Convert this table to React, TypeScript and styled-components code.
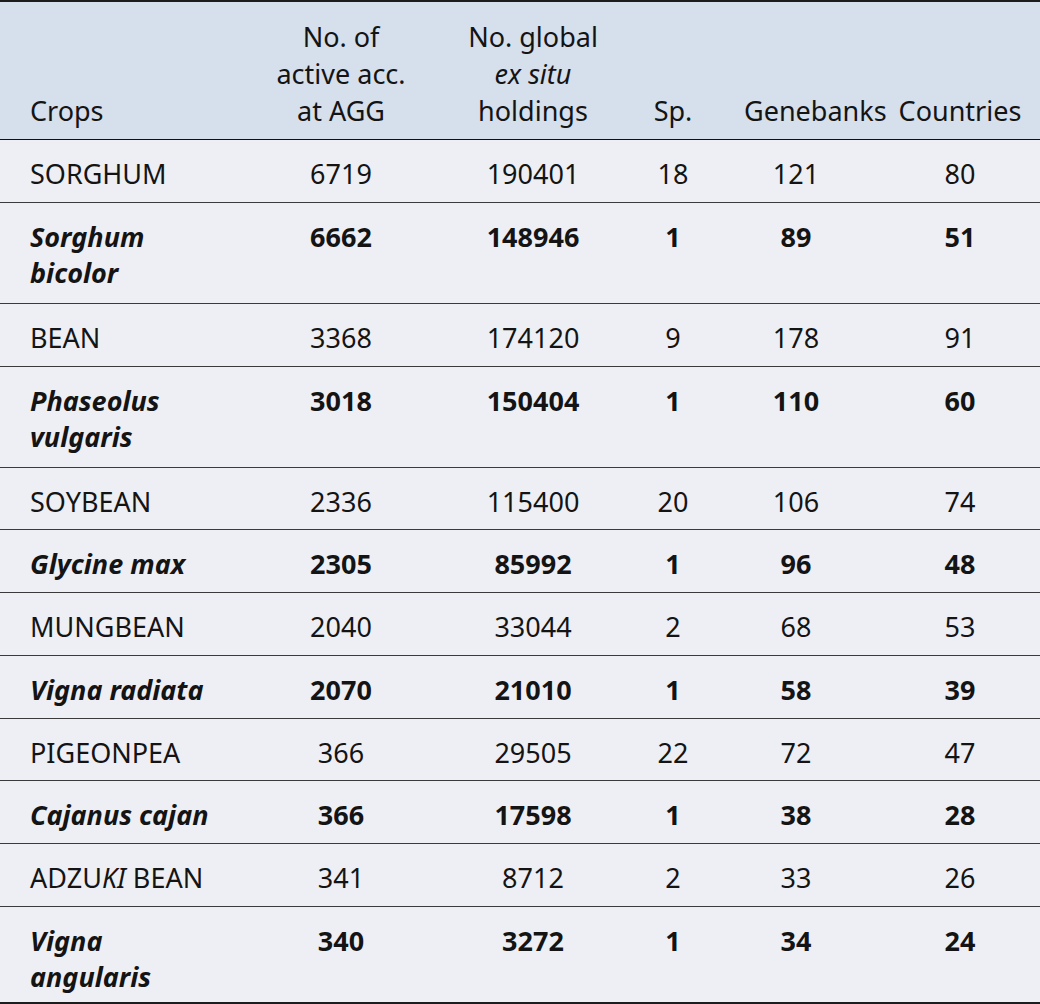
import React from "react";
import styled, { createGlobalStyle } from "styled-components";

const GlobalStyle = createGlobalStyle`
  html, body { margin: 0; padding: 0; background: #ffffff; }
  body { font-family: "Noto Sans", Lato, "Liberation Sans", sans-serif; color: #141414; }
`;

const COLS = "232px 158px 226px 54px 192px 136px";

const Table = styled.div`
  width: 1040px;
  border-top: 2px solid #1c1c1c;
  border-bottom: 2px solid #1c1c1c;
  background: #eeeff4;
  font-size: 27px;
`;

const HeaderRow = styled.div`
  display: grid;
  grid-template-columns: ${COLS};
  align-items: end;
  padding: 0 0 10px 30px;
  height: 138px;
  box-sizing: border-box;
  background: #d6dfec;
  border-bottom: 1px solid #111;
  line-height: 37px;
`;

const HeadCell = styled.div<{ $left?: boolean; $padL?: number; $padR?: number }>`
  text-align: ${(p) => (p.$left ? "left" : "center")};
  white-space: nowrap;
  padding-left: ${(p) => p.$padL ?? 0}px;
  padding-right: ${(p) => p.$padR ?? 0}px;
  min-width: 0;
`;

const Line = styled.div<{ $italic?: boolean }>`
  font-style: ${(p) => (p.$italic ? "italic" : "normal")};
`;

const BodyRow = styled.div<{ $bold?: boolean; $wrapped?: boolean }>`
  display: grid;
  grid-template-columns: ${COLS};
  align-items: start;
  padding: 16px 0 ${(p) => (p.$wrapped ? 12 : 9.75)}px 30px;
  line-height: 36px;
  font-weight: ${(p) => (p.$bold ? 700 : 400)};
  border-bottom: 1px solid #3a3a3a;
  &:last-child {
    border-bottom: none;
    padding-bottom: 7px;
  }
`;

const NameCell = styled.div<{ $italic?: boolean }>`
  text-align: left;
  font-style: ${(p) => (p.$italic ? "italic" : "normal")};
`;

const NumCell = styled.div`
  text-align: center;
`;

type Row = {
  name: React.ReactNode;
  lines: number;
  species: boolean;
  v: number[];
};

const rows: Row[] = [
  { name: "SORGHUM", lines: 1, species: false, v: [6719, 190401, 18, 121, 80] },
  { name: <>Sorghum<br />bicolor</>, lines: 2, species: true, v: [6662, 148946, 1, 89, 51] },
  { name: "BEAN", lines: 1, species: false, v: [3368, 174120, 9, 178, 91] },
  { name: <>Phaseolus<br />vulgaris</>, lines: 2, species: true, v: [3018, 150404, 1, 110, 60] },
  { name: "SOYBEAN", lines: 1, species: false, v: [2336, 115400, 20, 106, 74] },
  { name: "Glycine max", lines: 1, species: true, v: [2305, 85992, 1, 96, 48] },
  { name: "MUNGBEAN", lines: 1, species: false, v: [2040, 33044, 2, 68, 53] },
  { name: "Vigna radiata", lines: 1, species: true, v: [2070, 21010, 1, 58, 39] },
  { name: "PIGEONPEA", lines: 1, species: false, v: [366, 29505, 22, 72, 47] },
  { name: "Cajanus cajan", lines: 1, species: true, v: [366, 17598, 1, 38, 28] },
  { name: <>ADZU<i>KI</i> BEAN</>, lines: 1, species: false, v: [341, 8712, 2, 33, 26] },
  { name: <>Vigna<br />angularis</>, lines: 2, species: true, v: [340, 3272, 1, 34, 24] },
];

export default function App() {
  return (
    <>
      <GlobalStyle />
      <Table>
        <HeaderRow>
          <HeadCell $left>Crops</HeadCell>
          <HeadCell>
            <Line>No. of</Line>
            <Line>active acc.</Line>
            <Line>at AGG</Line>
          </HeadCell>
          <HeadCell>
            <Line>No. global</Line>
            <Line $italic>ex situ</Line>
            <Line>holdings</Line>
          </HeadCell>
          <HeadCell>Sp.</HeadCell>
          <HeadCell $padL={44} $padR={44}>Genebanks</HeadCell>
          <HeadCell $padL={6} $padR={6}>Countries</HeadCell>
        </HeaderRow>
        {rows.map((r, i) => (
          <BodyRow key={i} $bold={r.species} $wrapped={r.lines > 1}>
            <NameCell $italic={r.species}>{r.name}</NameCell>
            {r.v.map((n, j) => (
              <NumCell key={j}>{n}</NumCell>
            ))}
          </BodyRow>
        ))}
      </Table>
    </>
  );
}
